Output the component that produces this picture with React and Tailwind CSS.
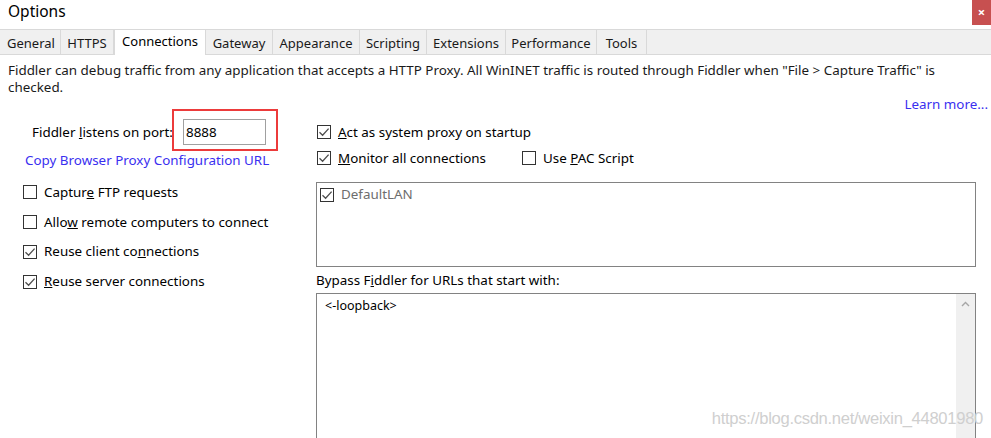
import React from "react";

const font = { fontFamily: '"Noto Sans", "Open Sans", sans-serif' };

function Check({ checked }) {
  return (
    <span className="inline-flex w-[14px] h-[14px] shrink-0 border border-[#333333] bg-white items-center justify-center">
      {checked && (
        <svg width="12" height="12" viewBox="0 0 12 12">
          <path d="M1.5 6.2 L4.6 9.2 L10.6 2.6" fill="none" stroke="#4d4d4d" strokeWidth="1.3" />
        </svg>
      )}
    </span>
  );
}

function CheckRow({ checked, children, className = "" }) {
  return (
    <div className={"flex items-center gap-[7px] " + className}>
      <Check checked={checked} />
      <span className="text-[#000] leading-[17px]">{children}</span>
    </div>
  );
}

const tabs = [
  ["General", 59],
  ["HTTPS", 53],
  ["Connections", 92],
  ["Gateway", 67],
  ["Appearance", 87],
  ["Scripting", 67],
  ["Extensions", 79],
  ["Performance", 91],
  ["Tools", 50],
];

export default function App() {
  return (
    <div className="relative w-[991px] h-[438px] overflow-hidden bg-white text-[13.4px] text-black" style={font}>
      {/* title bar */}
      <div className="flex h-[29px] justify-between">
        <div className="pl-[8px] pt-[1px] text-[15.5px] leading-[20px]">Options</div>
        <div className="w-[19px] h-[25px] bg-[#c75050] flex items-center justify-center text-white text-[13px] font-bold leading-none">
          ×
        </div>
      </div>

      {/* tab strip */}
      <div className="flex h-[26px] bg-[#f0f0f0] border-y border-[#d9d9d9] pl-[2px] items-stretch">
        {tabs.map(([t, w], i) =>
          i === 2 ? (
            <div
              key={t}
              style={{ width: w }}
              className="relative -mt-[1px] -mb-[1px] bg-white border-x border-t border-[#d9d9d9] flex items-center justify-center text-[13px] pb-[2px]"
            >
              {t}
            </div>
          ) : (
            <div
              key={t}
              style={{ width: w }}
              className="border-r border-[#d9d9d9] flex items-center justify-center text-[13px] text-[#1a1a1a] pt-[3px]"
            >
              {t}
            </div>
          )
        )}
      </div>

      {/* description */}
      <div className="pl-[8px] pr-[30px] pt-[7px] leading-[17px] text-[#1a1a1a]">
        Fiddler can debug traffic from any application that accepts a HTTP Proxy. All WinINET traffic is routed through Fiddler when "File &gt; Capture Traffic" is checked.
      </div>
      <div className="flex justify-end pr-[3px] leading-[17px]">
        <span className="text-[#3a2ff0]">Learn more...</span>
      </div>

      {/* main */}
      <div className="flex">
        {/* left column */}
        <div className="w-[316px] shrink-0 pt-[6px]">
          <div className="flex items-center h-[26px]">
            <span className="w-[183px] pl-[32px] shrink-0">
              Fiddler <span className="underline">l</span>istens on port:
            </span>
            <div className="relative">
              <div className="w-[83px] h-[26px] border border-[#a0a0a0] flex items-center pl-[2px] text-[13.4px]">8888</div>
              <div className="absolute left-[-11px] top-[-10px] w-[106px] h-[42px] border-2 border-[#ec3b3b]" />
            </div>
          </div>
          <div className="pl-[25px] mt-[7px] leading-[17px] text-[#3a2ff0]">Copy Browser Proxy Configuration URL</div>
          <div className="mt-[8px] pl-[23px]">
            <CheckRow className="h-[30px]">
              Captur<span className="underline">e</span> FTP requests
            </CheckRow>
            <CheckRow className="h-[30px]">
              Allo<span className="underline">w</span> remote computers to connect
            </CheckRow>
            <CheckRow checked className="h-[29px]">
              Reuse client co<span className="underline">n</span>nections
            </CheckRow>
            <CheckRow checked className="h-[31px]">
              <span className="underline">R</span>euse server connections
            </CheckRow>
          </div>
        </div>

        {/* right column */}
        <div className="flex-1 pr-[15px] pt-[6px]">
          <div className="pl-[1px]">
            <CheckRow checked className="h-[26px]">
              <span className="underline">A</span>ct as system proxy on startup
            </CheckRow>
            <div className="flex h-[26px] items-center">
              <CheckRow checked className="w-[205px]">
                <span className="underline">M</span>onitor all connections
              </CheckRow>
              <CheckRow>
                Use <span className="underline">P</span>AC Script
              </CheckRow>
            </div>
          </div>
          <div className="mt-[11px] h-[85px] border border-[#828282] pl-[3px] pt-[3px]">
            <div className="flex items-center gap-[7px]">
              <Check checked />
              <span className="text-[#6d6d6d] leading-[17px]">DefaultLAN</span>
            </div>
          </div>
          <div className="mt-[5px] leading-[17px]">
            Bypass F<span className="underline">i</span>ddler for URLs that start with:
          </div>
          <div className="mt-[4px] h-[160px] border border-[#828282] flex">
            <div className="flex-1 pl-[8px] pt-[3px] leading-[17px] text-[12.5px]">&lt;-loopback&gt;</div>
            <div className="w-[19px] bg-[#f0f0f0] flex justify-center pt-[7px]">
              <svg width="9" height="6" viewBox="0 0 9 6">
                <path d="M1 5 L4.5 1.5 L8 5" fill="none" stroke="#a6a6a6" strokeWidth="1.4" />
              </svg>
            </div>
          </div>
        </div>
      </div>

      {/* watermark */}
      <div
        className="absolute right-[8px] bottom-[9px] text-[16.6px] leading-[20px] text-[#cfcfcf] tracking-[-0.3px]"
        style={{ fontFamily: '"Liberation Sans", Arial, sans-serif' }}
      >
        https://blog.csdn.net/weixin_44801980
      </div>
    </div>
  );
}
